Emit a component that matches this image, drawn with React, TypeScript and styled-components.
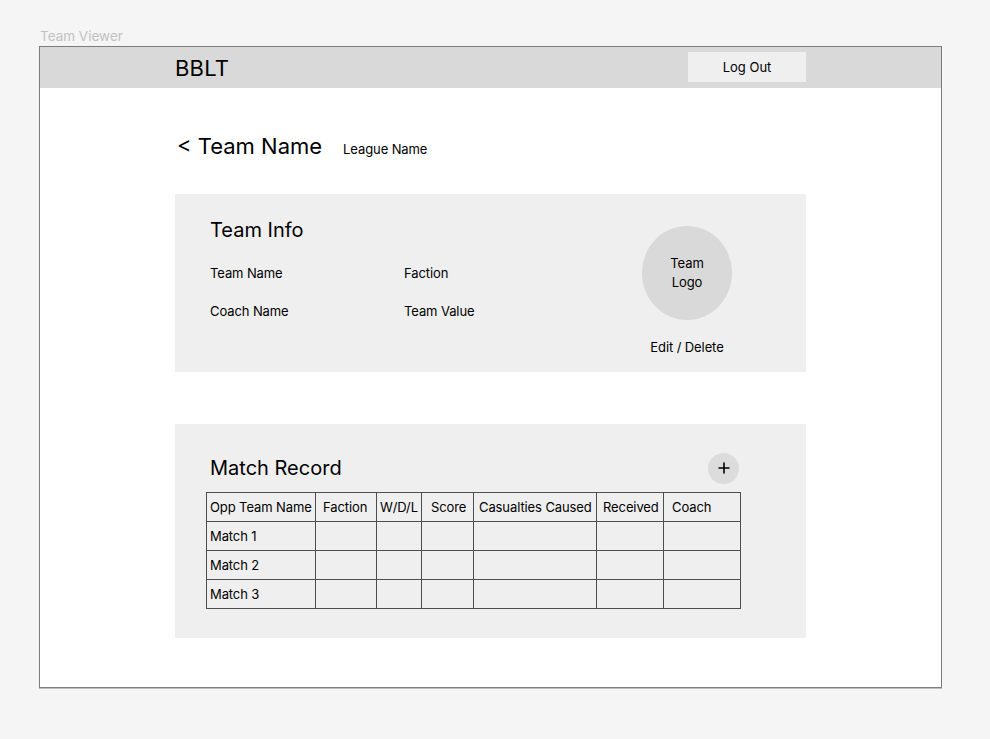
import React from "react";
import styled, { createGlobalStyle } from "styled-components";

const Global = createGlobalStyle`
  html, body { margin: 0; padding: 0; background: #f5f5f5; }
  body { font-family: Inter, "Liberation Sans", Arial, sans-serif; color: #000; }
  * { box-sizing: border-box; }
`;

const Canvas = styled.div`
  width: 990px;
  height: 739px;
  padding: 28px 0 0 39px;
  background: #f5f5f5;
`;

const FrameLabel = styled.div`
  font-size: 13.5px;
  line-height: 16px;
  color: #c2c2c2;
  padding-left: 1px;
  margin-bottom: 2px;
`;

const Frame = styled.div`
  width: 903px;
  height: 642px;
  background: #fff;
  border: 1px solid #7c7c7c;
  box-shadow: 0 1px 0 #bdbdbd;
  display: flex;
  flex-direction: column;
`;

const TopBar = styled.header`
  height: 41px;
  background: #d9d9d9;
  display: flex;
  align-items: center;
  justify-content: space-between;
  padding: 0 135px;
`;

const Brand = styled.div`
  font-size: 22px;
  line-height: 26px;
  letter-spacing: 0.2px;
`;

const LogOut = styled.button`
  width: 118px;
  height: 30px;
  margin-top: -1px;
  background: #efefef;
  border: none;
  font-family: inherit;
  font-size: 13px;
  color: #000;
  padding: 0;
`;

const Main = styled.main`
  padding: 44px 135px 0;
  display: flex;
  flex-direction: column;
  font-size: 13px;
  letter-spacing: -0.1px;
`;

const TitleRow = styled.div`
  display: flex;
  align-items: baseline;
  gap: 21px;
  padding-left: 2px;
  height: 36px;
  letter-spacing: 0;
`;

const PageTitle = styled.h1`
  margin: 0;
  font-size: 22px;
  font-weight: 400;
  line-height: 28px;
`;

const League = styled.span`
  font-size: 13px;
  letter-spacing: -0.1px;
`;

const Card = styled.section<{ $h: number; $mt: number }>`
  margin-top: ${(p) => p.$mt}px;
  height: ${(p) => p.$h}px;
  background: #efefef;
`;

const InfoCard = styled(Card)`
  display: flex;
  justify-content: space-between;
  padding: 24px 74px 0 35px;
`;

const InfoLeft = styled.div`
  display: flex;
  flex-direction: column;
`;

const CardHeading = styled.h2`
  margin: 0;
  font-size: 20px;
  font-weight: 400;
  line-height: 24px;
  letter-spacing: 0;
`;

const InfoGrid = styled.div`
  margin-top: 23px;
  display: grid;
  grid-template-columns: 194px 120px;
  row-gap: 22px;
  font-size: 13px;
  line-height: 16px;
`;

const InfoRight = styled.div`
  width: 90px;
  padding-top: 8px;
  display: flex;
  flex-direction: column;
  align-items: center;
`;

const Logo = styled.div`
  width: 90px;
  height: 94px;
  border-radius: 50%;
  background: #d9d9d9;
  display: flex;
  align-items: center;
  justify-content: center;
  text-align: center;
  font-size: 13px;
  line-height: 19px;
`;

const EditDelete = styled.div`
  margin-top: 19px;
  font-size: 13px;
  line-height: 16px;
  white-space: nowrap;
`;

const MatchCard = styled(Card)`
  padding: 32px 67px 0 31px;
  display: flex;
  flex-direction: column;
`;

const MatchHead = styled.div`
  display: flex;
  align-items: center;
  justify-content: space-between;
  height: 24px;
  padding-left: 4px;
`;

const AddButton = styled.button`
  width: 31px;
  height: 31px;
  border-radius: 50%;
  border: none;
  background: #dcdcdc;
  padding: 0;
  display: flex;
  align-items: center;
  justify-content: center;
`;

const Table = styled.table`
  margin-top: 12px;
  border-collapse: collapse;
  table-layout: fixed;
  width: 534px;
  font-size: 13px;
`;

const Cell = styled.td<{ $pad: number }>`
  border: 1px solid #4d4d4d;
  height: 29px;
  padding: 0 0 0 ${(p) => p.$pad}px;
  white-space: nowrap;
  overflow: hidden;
  line-height: 16px;
  vertical-align: middle;
  font-weight: 400;
  text-align: left;
`;

const columns = [
  { name: "Opp Team Name", w: 109, pad: 3 },
  { name: "Faction", w: 61, pad: 7 },
  { name: "W/D/L", w: 45, pad: 3 },
  { name: "Score", w: 52, pad: 9 },
  { name: "Casualties Caused", w: 123, pad: 5 },
  { name: "Received", w: 67, pad: 6 },
  { name: "Coach", w: 77, pad: 8 },
];

const matches = ["Match 1", "Match 2", "Match 3"];

const PlusIcon = () => (
  <svg width="12" height="12" viewBox="0 0 12 12">
    <path d="M6 0.5v11M0.5 6h11" stroke="#000" strokeWidth="1.6" />
  </svg>
);

export default function App() {
  return (
    <Canvas>
      <Global />
      <FrameLabel>Team Viewer</FrameLabel>
      <Frame>
        <TopBar>
          <Brand>BBLT</Brand>
          <LogOut>Log Out</LogOut>
        </TopBar>
        <Main>
          <TitleRow>
            <PageTitle>&lt; Team Name</PageTitle>
            <League>League Name</League>
          </TitleRow>
          <InfoCard $h={178} $mt={26}>
            <InfoLeft>
              <CardHeading>Team Info</CardHeading>
              <InfoGrid>
                <span>Team Name</span>
                <span>Faction</span>
                <span>Coach Name</span>
                <span>Team Value</span>
              </InfoGrid>
            </InfoLeft>
            <InfoRight>
              <Logo>
                Team
                <br />
                Logo
              </Logo>
              <EditDelete>Edit / Delete</EditDelete>
            </InfoRight>
          </InfoCard>
          <MatchCard $h={214} $mt={52}>
            <MatchHead>
              <CardHeading>Match Record</CardHeading>
              <AddButton aria-label="Add match">
                <PlusIcon />
              </AddButton>
            </MatchHead>
            <Table>
              <colgroup>
                {columns.map((c) => (
                  <col key={c.name} style={{ width: c.w }} />
                ))}
              </colgroup>
              <thead>
                <tr>
                  {columns.map((c) => (
                    <Cell as="th" key={c.name} $pad={c.pad}>
                      {c.name}
                    </Cell>
                  ))}
                </tr>
              </thead>
              <tbody>
                {matches.map((m) => (
                  <tr key={m}>
                    {columns.map((c, i) => (
                      <Cell key={c.name} $pad={3}>
                        {i === 0 ? m : ""}
                      </Cell>
                    ))}
                  </tr>
                ))}
              </tbody>
            </Table>
          </MatchCard>
        </Main>
      </Frame>
    </Canvas>
  );
}
